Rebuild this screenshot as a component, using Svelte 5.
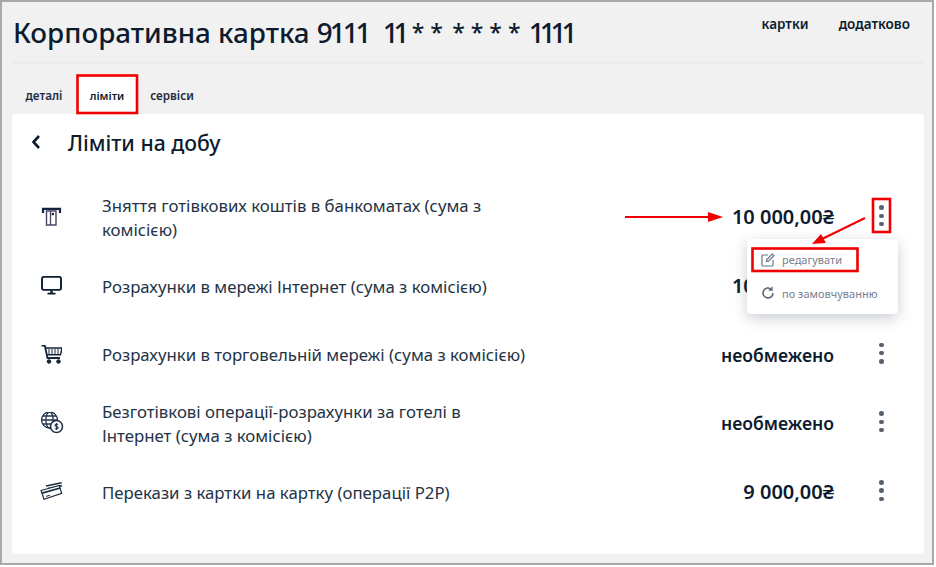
<script lang="ts">
interface Limit {
  icon: string;
  label: string;
  value: string;
  word?: boolean;
}

const limits: Limit[] = [
  { icon: 'atm', label: 'Зняття готівкових коштів в банкоматах (сума з\nкомісією)', value: '10 000,00₴' },
  { icon: 'monitor', label: 'Розрахунки в мережі Інтернет (сума з комісією)', value: '10 000,00₴' },
  { icon: 'cart', label: 'Розрахунки в торговельній мережі (сума з комісією)', value: 'необмежено', word: true },
  { icon: 'globe', label: 'Безготівкові операції-розрахунки за готелі в\nІнтернет (сума з комісією)', value: 'необмежено', word: true },
  { icon: 'cards', label: 'Перекази з картки на картку (операції P2P)', value: '9 000,00₴' },
];
</script>

<div class="page">
  <header class="top">
    <h1>Корпоративна картка <span class="digits">9111</span> <span class="digits two">11</span> <span class="stars">* *</span> <span class="stars four">* * * *</span> <span class="digits last">1111</span></h1>
    <nav class="top-nav">
      <span>картки</span>
      <span>додатково</span>
    </nav>
  </header>

  <div class="tabs">
    <span class="tab">деталі</span>
    <span class="tab active">ліміти</span>
    <span class="tab">сервіси</span>
  </div>

  <section class="card">
    <div class="card-title">
      <svg class="back" width="12" height="16" viewBox="0 0 12 16"><path d="M9 2 L3.5 8 L9 14" fill="none" stroke="#0d1b2e" stroke-width="2.6" /></svg>
      <h2>Ліміти на добу</h2>
    </div>

    <div class="rows">
      {#each limits as limit}
        <div class="row">
          <div class="icon">
            {#if limit.icon === 'atm'}
              <svg width="22" height="22" viewBox="0 0 22 22" fill="none" stroke="#14243a">
                <path d="M3 6 V1.8 H20 V6" stroke-width="2.2" />
                <path d="M6.5 4 H16 V18 H6.5 Z" stroke-width="1.4" stroke="#4c4562" />
                <path d="M10.5 4 V18" stroke-width="1.3" stroke="#4c4562" />
                <rect x="11.7" y="6" width="2.2" height="2.2" fill="#14243a" stroke="none" />
              </svg>
            {:else if limit.icon === 'monitor'}
              <svg width="22" height="22" viewBox="0 0 22 22" fill="none" stroke="#0d1b2e">
                <rect x="2" y="0.9" width="19" height="13" rx="1.8" stroke-width="1.9" />
                <path d="M11.5 14.5 V17" stroke-width="2.4" />
                <path d="M7.5 17.6 H15.5" stroke-width="1.8" />
              </svg>
            {:else if limit.icon === 'cart'}
              <svg width="22" height="22" viewBox="0 2 22 22" fill="none" stroke="#14263c">
                <path d="M1.5 2.5 H4.8 L7.5 15 H20" stroke-width="1.8" />
                <path d="M5.5 5 H22 L20.5 11.8 H7" stroke-width="1.5" />
                <path d="M9 6 V11 M12 6 V11 M15 6 V11 M18 6 V11" stroke-width="1" />
                <circle cx="9" cy="18.5" r="1.8" fill="#14263c" />
                <circle cx="18.5" cy="18.5" r="1.8" fill="#14263c" />
              </svg>
            {:else if limit.icon === 'globe'}
              <svg width="24" height="24" viewBox="0 1.5 24 24" fill="none" stroke="#24344a" stroke-width="1.3">
                <circle cx="9.5" cy="9.5" r="8" />
                <ellipse cx="9.5" cy="9.5" rx="3.6" ry="8" />
                <path d="M1.5 9.5 H17.5 M2.8 5.5 H16.2 M2.8 13.5 H16.2" />
                <circle cx="16.5" cy="16" r="6" fill="#fff" stroke-width="1.6" />
                <path d="M18.2 14 C17.4 13.2 15 13.4 15 15 C15 16.6 18.2 15.6 18.2 17.2 C18.2 18.8 15.6 18.9 14.8 18 M16.5 12.4 V19.6" stroke-width="1.1" />
              </svg>
            {:else}
              <svg width="24" height="22" viewBox="0 0 24 22" fill="none" stroke="#1c2c42">
                <path d="M6 4 L21.7 0.8 M8 6.6 L22 3.8" stroke-width="1.6" />
                <path d="M1 8.5 L19.3 3.5 L21.7 11.3 L4 17.3 Z" stroke-width="1.2" fill="#fff" />
                <path d="M2 11.2 L20.2 6" stroke-width="1.8" />
                <path d="M6 14.4 L10 13.2" stroke-width="1" />
              </svg>
            {/if}
          </div>
          <div class="label">{limit.label}</div>
          <div class="value" class:word={limit.word}>{limit.value}</div>
          <div class="dots"><i></i><i></i><i></i></div>
        </div>
      {/each}
    </div>
  </section>

  <div class="menu">
    <div class="menu-item">
      <svg width="14" height="14" viewBox="0 0 14 14" fill="none" stroke="#6b7785" stroke-width="1.2">
        <path d="M7 2 H2 A1 1 0 0 0 1 3 V12 A1 1 0 0 0 2 13 H11 A1 1 0 0 0 12 12 V7" />
        <path d="M5.5 8.5 L5.8 6.5 L11.3 1 L13 2.7 L7.5 8.2 Z" />
      </svg>
      редагувати
    </div>
    <div class="menu-item">
      <svg width="14" height="14" viewBox="0 0 14 14" fill="none" stroke="#55626f" stroke-width="1.5">
        <path d="M12 7 A5 5 0 1 1 10.4 3.3" />
        <path d="M11 0.8 V4 H7.8" stroke-width="1.3" />
      </svg>
      по замовчуванню
    </div>
  </div>

  <svg class="marks" width="936" height="567" viewBox="0 0 936 567" fill="none">
    <rect x="77.5" y="75.5" width="59.5" height="37.5" stroke="#f00000" stroke-width="2.6" />
    <rect x="873" y="199" width="17" height="33" stroke="#f00000" stroke-width="2.6" />
    <rect x="752.5" y="248.5" width="105" height="22.5" stroke="#f00000" stroke-width="2.6" />
    <path d="M625 217 H712" stroke="#f00000" stroke-width="2" />
    <path d="M723 217 L708 212 V222 Z" fill="#f00000" />
    <path d="M865 218 L822 239" stroke="#f00000" stroke-width="2" />
    <path d="M812 244 L821 234 L826 243 Z" fill="#f00000" />
  </svg>
</div>

<style>
:global(body) {
  margin: 0;
  background: #fff;
}

.page {
  position: relative;
  width: 934px;
  height: 565px;
  box-sizing: border-box;
  border: 2px solid #a9a9a9;
  padding: 0 8px 9.5px 10px;
  display: flex;
  flex-direction: column;
  background: #f1f1f1;
  color: #0d1b2e;
  font-family: "Noto Sans", "Open Sans", sans-serif;
  overflow: hidden;
}

.top {
  height: 60px;
  flex-shrink: 0;
  display: flex;
  justify-content: space-between;
  align-items: flex-start;
  border-bottom: 2px solid #ebebeb;
}

h1 {
  margin: 12px 0 0 1px;
  font-size: 27.8px;
  line-height: 36px;
  font-weight: 500;
  white-space: nowrap;
}

.digits {
  letter-spacing: -3px;
}

.digits.two {
  letter-spacing: -5px;
  margin-left: 7px;
}

.digits.last {
  letter-spacing: -5px;
  margin-left: 1px;
}

.stars {
  font-size: 23px;
  line-height: 1;
  vertical-align: 2px;
}

.stars.four {
  margin-left: 2px;
}

.top-nav {
  display: flex;
  gap: 30px;
  margin: 13px 14px 0 0;
  font-size: 13.5px;
  line-height: 18px;
  font-weight: 600;
}

.tabs {
  height: 50px;
  flex-shrink: 0;
  display: flex;
  align-items: flex-end;
}

.tab {
  width: 64px;
  height: 38px;
  display: flex;
  align-items: center;
  justify-content: center;
  font-size: 11.7px;
  font-weight: 600;
  color: #1f2c3d;
}

.tab.active {
  width: 60px;
  background: #fff;
  margin-left: 1px;
  margin-right: 3px;
  font-size: 11px;
  color: #0d1b2e;
}

.card {
  flex: 1;
  background: #fff;
  border-radius: 4px;
  padding: 0 40px 0 18px;
}

.card-title {
  display: flex;
  align-items: center;
  height: 56px;
}

.back {
  margin-right: 26px;
}

h2 {
  margin: 0;
  font-size: 21.2px;
  font-weight: 500;
}

.rows {
  display: flex;
  flex-direction: column;
  margin-top: 14px;
}

.row {
  height: 68.7px;
  display: flex;
  align-items: center;
}

.icon {
  width: 72px;
  padding-left: 10px;
  box-sizing: border-box;
  flex-shrink: 0;
  display: flex;
}

.label {
  flex: 1;
  font-size: 16.8px;
  line-height: 24.5px;
  color: #243345;
  white-space: pre;
}

.value {
  font-size: 20px;
  line-height: 26px;
  margin-top: -2px;
  font-weight: 600;
  white-space: nowrap;
}

.value.word {
  font-size: 17.6px;
}

.dots {
  margin-left: 45px;
  margin-top: -5px;
  width: 5px;
  display: flex;
  flex-direction: column;
  align-items: center;
  gap: 3.8px;
}

.dots i {
  width: 4.5px;
  height: 4.5px;
  border-radius: 50%;
  background: #56616e;
}

.menu {
  position: absolute;
  left: 745px;
  top: 237px;
  width: 151px;
  height: 75px;
  box-sizing: border-box;
  padding: 11px 14px;
  background: #fff;
  border-radius: 4px;
  box-shadow: 0 4px 14px rgba(40, 55, 75, 0.25);
  display: flex;
  flex-direction: column;
  gap: 14px;
}

.menu-item {
  display: flex;
  align-items: center;
  gap: 7px;
  height: 20px;
  font-size: 11px;
  color: #77818d;
  white-space: nowrap;
}

.marks {
  position: absolute;
  left: -2px;
  top: -2px;
}
</style>
